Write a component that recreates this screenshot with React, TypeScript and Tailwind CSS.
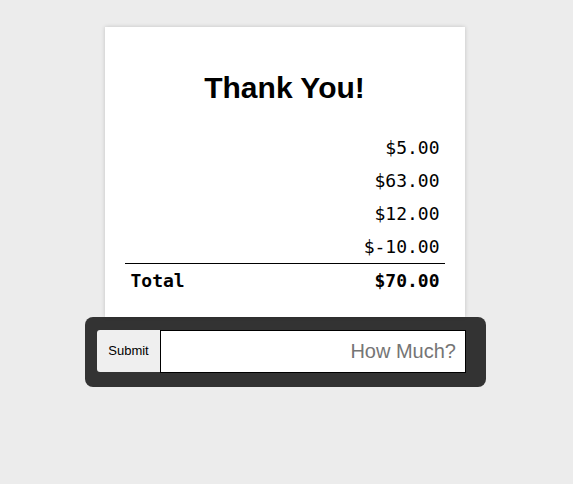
import React, { useState } from "react";

const items = [5, 63, 12, -10];

const money = (n: number) => "$" + n.toFixed(2);

const App = () => {
  const [amount, setAmount] = useState("");
  const total = items.reduce((a, b) => a + b, 0);

  return (
    <div className="min-h-[484px] w-full bg-[#ececec] pt-[27px] font-['Liberation_Sans',Arial,sans-serif]">
      <div className="mx-auto w-[401px] translate-x-[-1px]">
        <div className="mx-auto w-[360px] translate-x-[-1px] bg-white pt-[43px] pb-[20px] shadow-[0_0_4px_rgba(0,0,0,0.18)]">
          <h1 className="h-[36px] text-center text-[30px] font-bold leading-[36px] text-black">
            Thank You!
          </h1>
          <table className="mx-auto mt-[25px] w-[320px] border-collapse font-['DejaVu_Sans_Mono','Liberation_Mono',monospace] text-[18px] text-black">
            <tbody>
              {items.map((n, i) => (
                <tr key={i} className="h-[33px]">
                  <td />
                  <td className="px-[5px] text-right">{money(n)}</td>
                </tr>
              ))}
              <tr className="h-[34px] border-t border-black font-bold">
                <td className="px-[6px] text-left">Total</td>
                <td className="px-[5px] text-right">{money(total)}</td>
              </tr>
            </tbody>
          </table>
        </div>
        <form
          className="flex h-[70px] items-start rounded-[8px] bg-[#333333] pl-[12px] pr-[20px] pt-[13px]"
          onSubmit={(e) => e.preventDefault()}
        >
          <button
            type="submit"
            className="h-[42px] w-[63px] rounded-l-[3px] bg-[#efefef] text-[13px] text-black"
          >
            Submit
          </button>
          <input
            value={amount}
            onChange={(e) => setAmount(e.target.value)}
            placeholder="How Much?"
            className="h-[43px] flex-1 border border-black bg-white pr-[9px] text-right text-[20px] text-black outline-none placeholder:text-[#757575]"
          />
        </form>
      </div>
    </div>
  );
};

export default App;
